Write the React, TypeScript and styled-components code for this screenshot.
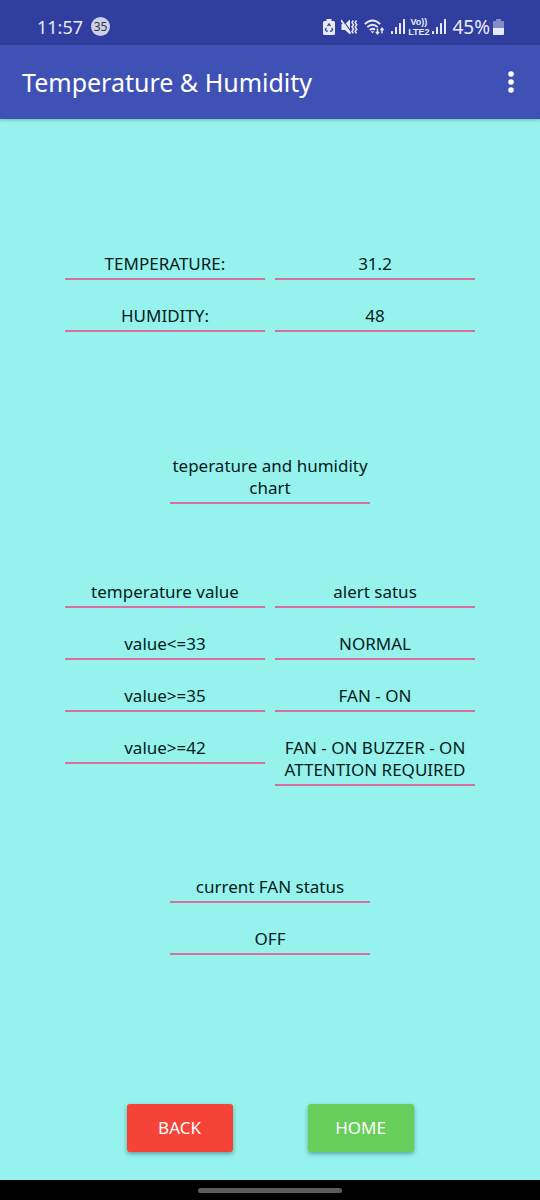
import React from 'react';
import styled, { createGlobalStyle } from 'styled-components';

const GlobalStyle = createGlobalStyle`
  *, *::before, *::after { box-sizing: border-box; }
  body { margin: 0; background: #96f2ec; }
  body, button, input { font-family: "Noto Sans", "Open Sans", sans-serif; }
`;

const Screen = styled.div`
  display: flex;
  flex-direction: column;
  min-height: 100vh;
  background: #96f2ec;
  color: #051c1c;
`;

const StatusBar = styled.div`
  display: flex;
  align-items: center;
  justify-content: space-between;
  height: 45px;
  padding: 8px 36px 0 37px;
  background: #303e9f;
  color: #e8eaf8;
  font-size: 18px;
  line-height: 24px;
`;

const StatusGroup = styled.div<{ $gap: number }>`
  display: flex;
  align-items: center;
  gap: ${({ $gap }) => $gap}px;
`;

const BatteryLevel = styled.span`
  font-size: 19px;
`;

const CountBadge = styled.span`
  display: grid;
  place-items: center;
  width: 19px;
  height: 19px;
  border-radius: 50%;
  background: #cdd0e8;
  color: #33353f;
  font-size: 12px;
  line-height: 19px;
`;

const VolteLabel = styled.span`
  display: grid;
  justify-items: center;
  font-family: "Liberation Sans", sans-serif;
  font-size: 9px;
  font-weight: 700;
  line-height: 10px;
`;

const AppBar = styled.header`
  display: flex;
  align-items: center;
  justify-content: space-between;
  height: 74px;
  padding: 0 14px 0 22px;
  background: #3f51b5;
  box-shadow: 0 1px 3px rgba(0, 60, 80, 0.3);
  color: #fff;
`;

const Title = styled.h1`
  margin: 0;
  font-size: 25px;
  font-weight: 400;
  line-height: 36px;
`;

const MenuButton = styled.button`
  display: grid;
  place-items: center;
  width: 30px;
  height: 48px;
  padding: 0;
  border: 0;
  background: none;
  color: inherit;
`;

const Content = styled.main`
  display: flex;
  flex: 1;
  flex-direction: column;
  align-items: center;
  padding: 117px 16px 28px;
`;

const Readings = styled.section`
  display: grid;
  grid-template-columns: 200px 200px;
  column-gap: 10px;
`;

const fieldStyle = `
  display: block;
  width: 200px;
  margin: 17px 0 8px;
  padding: 0 0 3px;
  border: 0;
  border-bottom: 2px solid #dc6f9f;
  border-radius: 0;
  background: none;
  color: inherit;
  font-size: 17px;
  font-weight: 400;
  line-height: 22px;
  text-align: center;
`;

const FieldLabel = styled.label`${fieldStyle}`;
const FieldText = styled.span`${fieldStyle}`;
const FieldInput = styled.input`
  ${fieldStyle}
  height: 27px;
  padding-bottom: 4px;
  outline: 0;
`;

const ChartHeading = styled.h2`
  margin: 98px 0 0;
`;

const AlertTable = styled.table`
  margin-top: 52px;
  border-collapse: collapse;

  th, td { padding: 0; vertical-align: top; }
  th + th, td + td { padding-left: 10px; }
`;

const FanStatus = styled.section`
  display: grid;
  margin-top: 65px;
`;

const Actions = styled.div`
  display: flex;
  gap: 75px;
  margin-top: auto;
`;

const ActionButton = styled.button<{ $color: string }>`
  width: 106px;
  height: 48px;
  padding: 0;
  border: 0;
  border-radius: 3px;
  background: ${({ $color }) => $color};
  box-shadow: 0 2px 4px rgba(0, 50, 60, 0.4);
  color: #fff;
  font-size: 17px;
  line-height: 24px;
`;

const NavigationBar = styled.div`
  display: grid;
  place-items: center;
  height: 20px;
  background: #000;
`;

const HomeHandle = styled.div`
  width: 144px;
  height: 5px;
  border-radius: 3px;
  background: #5c5c5c;
`;

const PowerSaveIcon = () => (
  <svg width="12" height="16" viewBox="0 0 12 16" aria-hidden="true">
    <path d="M3.500 0h5v2h2q1.500 0 1.500 1.500v11q0 1.500-1.500 1.500h-9Q0 16 0 14.500v-11Q0 2 1.500 2h2z" fill="currentColor" />
    <path d="M4.500 7.200 6 5l1.500 2.200M8.600 8.800l1 2-1 1.400H6.800M3.400 8.800l-1 2 1 1.400h1.400" fill="none" stroke="#303e9f" strokeWidth="1.300" />
  </svg>
);

const VibrateIcon = () => (
  <svg width="17" height="16" viewBox="0 0 17 16" aria-hidden="true">
    <path d="M0.500 5H4l5-4.500v15L4 11H0.500z" fill="currentColor" />
    <path d="M1.500 0.500 10 12.500" stroke="#303e9f" strokeWidth="1.200" />
    <path d="M0 1 9.500 14.500" stroke="currentColor" strokeWidth="1.600" />
    <path d="M12.300 1.500 11 3.600l1.500 2.200L11 8l1.500 2.200L11 12.400l1.300 2M15.500 1.500l-1.300 2.100 1.500 2.200L14.200 8l1.500 2.200-1.500 2.200 1.300 2" fill="none" stroke="currentColor" strokeWidth="1.500" />
  </svg>
);

const WifiIcon = () => (
  <svg width="21" height="16" viewBox="0 0 21 16" fill="none" stroke="currentColor" aria-hidden="true">
    <path d="M0.800 5.200Q8.500-2.200 16.200 5.200M3.300 8.200q5.200-4.800 10.400 0M5.800 11q2.700-2.400 5.200-0.200" strokeWidth="1.800" />
    <path d="M6.800 12.200h3.400L8.500 14.500z" fill="currentColor" stroke="none" />
    <path d="M13.500 9.500v5M11.900 12.900l1.600 1.900 1.600-1.900M18 14.500v-5M16.400 11.100 18 9.200l1.600 1.900" strokeWidth="1.400" />
  </svg>
);

const SignalIcon = () => (
  <svg width="14" height="15" viewBox="0 0 14 15" fill="currentColor" aria-hidden="true">
    <rect x="0" y="12" width="2" height="3" rx="0.500" />
    <rect x="4" y="8" width="2" height="7" rx="0.500" />
    <rect x="8" y="4" width="2" height="11" rx="0.500" />
    <rect x="12" y="0" width="2" height="15" rx="0.500" />
  </svg>
);

const BatteryIcon = () => (
  <svg width="11" height="16" viewBox="0 0 11 16" fill="currentColor" aria-hidden="true">
    <path d="M3 0h5v2h2q1 0 1 1v6H0V3q0-1 1-1h2z" opacity="0.450" />
    <path d="M0 9h11v6q0 1-1 1H1q-1 0-1-1z" />
  </svg>
);

const MoreIcon = () => (
  <svg width="6" height="22" viewBox="0 0 6 22" fill="currentColor" aria-hidden="true">
    <circle cx="3" cy="3" r="2.800" />
    <circle cx="3" cy="11" r="2.800" />
    <circle cx="3" cy="19" r="2.800" />
  </svg>
);

const alertRows = [
  ['value<=33', 'NORMAL'],
  ['value>=35', 'FAN - ON'],
  ['value>=42', 'FAN - ON BUZZER - ON ATTENTION REQUIRED'],
];

export default function App() {
  return (
    <>
      <GlobalStyle />
      <Screen>
        <StatusBar>
          <StatusGroup $gap={8}>
            <span>11:57</span>
            <CountBadge>35</CountBadge>
          </StatusGroup>
          <StatusGroup $gap={6}>
            <PowerSaveIcon />
            <VibrateIcon />
            <WifiIcon />
            <StatusGroup $gap={3}>
              <SignalIcon />
              <VolteLabel>
                <span>Vo))</span>
                <span>LTE2</span>
              </VolteLabel>
              <SignalIcon />
            </StatusGroup>
            <StatusGroup $gap={3}>
              <BatteryLevel>45%</BatteryLevel>
              <BatteryIcon />
            </StatusGroup>
          </StatusGroup>
        </StatusBar>
        <AppBar>
          <Title>Temperature &amp; Humidity</Title>
          <MenuButton type="button" aria-label="More options">
            <MoreIcon />
          </MenuButton>
        </AppBar>
        <Content>
          <Readings>
            <FieldLabel htmlFor="temperature">TEMPERATURE:</FieldLabel>
            <FieldInput id="temperature" defaultValue="31.2" />
            <FieldLabel htmlFor="humidity">HUMIDITY:</FieldLabel>
            <FieldInput id="humidity" defaultValue="48" />
          </Readings>
          <ChartHeading>
            <FieldText>teperature and humidity chart</FieldText>
          </ChartHeading>
          <AlertTable>
            <thead>
              <tr>
                <th scope="col"><FieldText>temperature value</FieldText></th>
                <th scope="col"><FieldText>alert satus</FieldText></th>
              </tr>
            </thead>
            <tbody>
              {alertRows.map(([range, status]) => (
                <tr key={range}>
                  <td><FieldText>{range}</FieldText></td>
                  <td><FieldText>{status}</FieldText></td>
                </tr>
              ))}
            </tbody>
          </AlertTable>
          <FanStatus>
            <FieldLabel htmlFor="fan">current FAN status</FieldLabel>
            <FieldInput id="fan" defaultValue="OFF" />
          </FanStatus>
          <Actions>
            <ActionButton type="button" $color="#f64338">BACK</ActionButton>
            <ActionButton type="button" $color="#68ce5b">HOME</ActionButton>
          </Actions>
        </Content>
        <NavigationBar>
          <HomeHandle />
        </NavigationBar>
      </Screen>
    </>
  );
}
